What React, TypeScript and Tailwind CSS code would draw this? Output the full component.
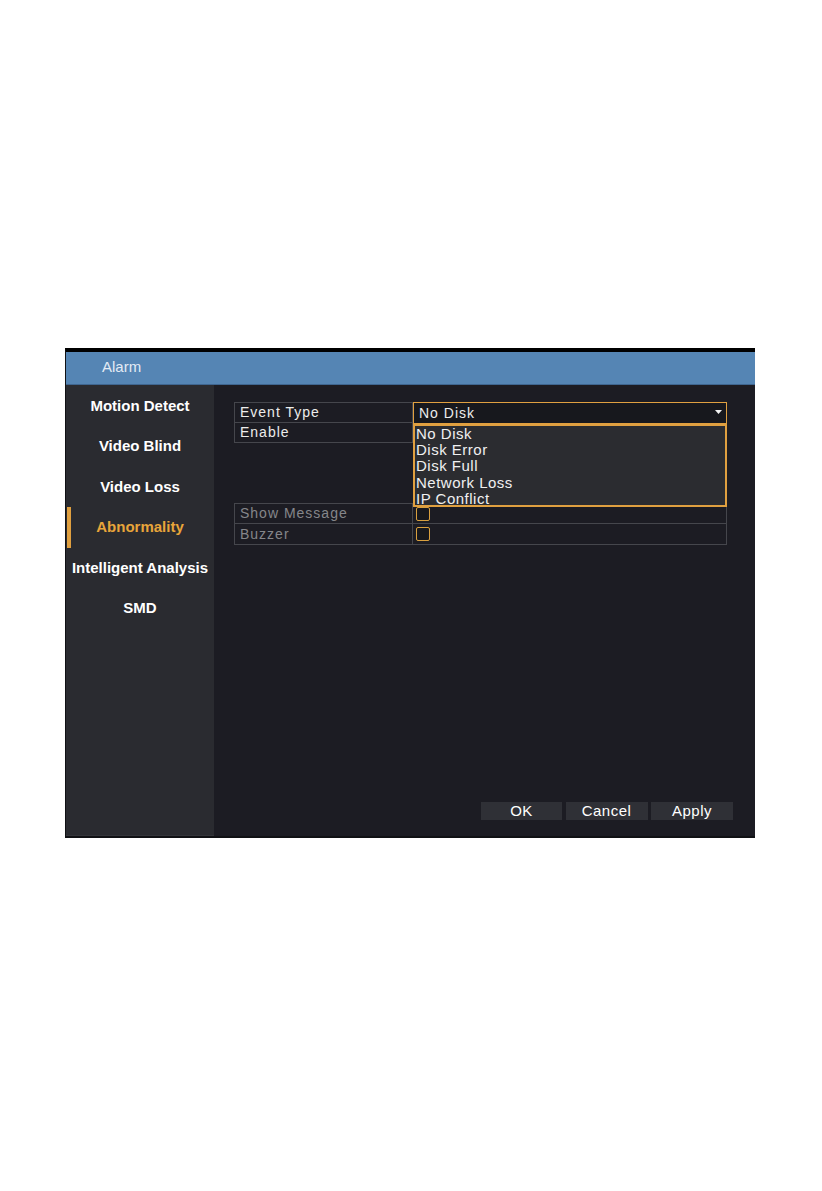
import React from 'react';

const MENU = ['Motion Detect', 'Video Blind', 'Video Loss', 'Abnormality', 'Intelligent Analysis', 'SMD'];
const EVENTS = ['No Disk', 'Disk Error', 'Disk Full', 'Network Loss', 'IP Conflict'];

const font = { fontFamily: '"Liberation Sans", Arial, sans-serif' };

const Checkbox = () => (
  <div className="w-[14px] h-[14px] rounded-[2px] border-[1.5px] border-[#d9a03f] bg-[#17181d]" />
);

const App = () => {
  const active = 'Abnormality';

  return (
    <div className="w-[822px] h-[1191px] bg-white pt-[348px] pl-[65px]" style={font}>
      <div className="w-[690px] h-[490px] flex flex-col border-t-4 border-t-black border-l border-l-[#101114] border-b-2 border-b-[#101114]">
        {/* title bar */}
        <div className="h-[33px] shrink-0 bg-[#5585b4] border-b border-[#3f6690] pl-[36px] pt-[4px] text-[15px] text-[#e3ebf4]">
          Alarm
        </div>

        <div className="flex flex-1 min-h-0">
          {/* side menu */}
          <div className="w-[148px] shrink-0 bg-[#2a2b30] pt-[1px] border-b border-[#34353a]">
            {MENU.map((item) => (
              <div
                key={item}
                className={`relative h-[40.4px] flex items-center justify-center text-[15px] font-bold ${
                  item === active ? 'text-[#e8a53a]' : 'text-white'
                }`}
              >
                {item === active && <div className="absolute left-[1px] top-0 bottom-0 w-[4px] bg-[#e0a040]" />}
                {item}
              </div>
            ))}
          </div>

          {/* content */}
          <div className="flex-1 bg-[#1c1c23] flex flex-col pl-[20px] pt-[17px] pr-[22px] pb-[16px]">
            <div className="relative w-[493px] text-[14px] tracking-[1px]">
              <div className="border border-[#45464c]">
                <div className="flex h-[20px] border-b border-[#45464c]">
                  <div className="w-[178px] border-r border-[#45464c] pl-[5px] flex items-center text-[#ececec]">Event Type</div>
                  <div className="flex-1" />
                </div>
                <div className="flex h-[19px]">
                  <div className="w-[178px] border-r border-[#45464c] pl-[5px] flex items-center text-[#ececec]">Enable</div>
                  <div className="flex-1" />
                </div>
              </div>

              <div className="h-[60px]" />

              <div className="border border-[#45464c]">
                <div className="flex h-[20px] border-b border-[#45464c]">
                  <div className="w-[178px] border-r border-[#45464c] pl-[5px] flex items-center text-[#85868a]">Show Message</div>
                  <div className="flex-1 flex items-center pl-[3px]">
                    <Checkbox />
                  </div>
                </div>
                <div className="flex h-[20px]">
                  <div className="w-[178px] border-r border-[#45464c] pl-[5px] flex items-center text-[#85868a]">Buzzer</div>
                  <div className="flex-1 flex items-center pl-[3px]">
                    <Checkbox />
                  </div>
                </div>
              </div>

              {/* select */}
              <div className="absolute left-[179px] top-0 w-[314px] h-[22px] border border-[#e0a040] bg-[#17181d] flex items-center pl-[5px] text-[#ececec]">
                No Disk
                <svg className="absolute right-[4px] top-[7px]" width="7" height="4" viewBox="0 0 7 4">
                  <path d="M0 0h7L3.5 4z" fill="#f2f2f2" />
                </svg>
              </div>

              {/* open list */}
              <div className="absolute left-[179px] top-[21px] w-[314px] h-[84px] border-2 border-t-[3px] border-[#e0a040] bg-[#2b2c30] text-[15px] tracking-[0.5px] text-[#f0f0f0] leading-[16.2px]">
                {EVENTS.map((e) => (
                  <div key={e} className="h-[16.2px] pl-[1px]">
                    {e}
                  </div>
                ))}
              </div>
            </div>

            <div className="flex-1" />

            <div className="flex justify-end gap-[3.5px] text-[15px] tracking-[0.5px] text-white">
              <button className="w-[81px] h-[18px] bg-[#2f3036] flex items-center justify-center">OK</button>
              <button className="w-[82px] h-[18px] bg-[#2f3036] flex items-center justify-center">Cancel</button>
              <button className="w-[82px] h-[18px] bg-[#2f3036] flex items-center justify-center">Apply</button>
            </div>
          </div>
        </div>
      </div>
    </div>
  );
};

export default App;
